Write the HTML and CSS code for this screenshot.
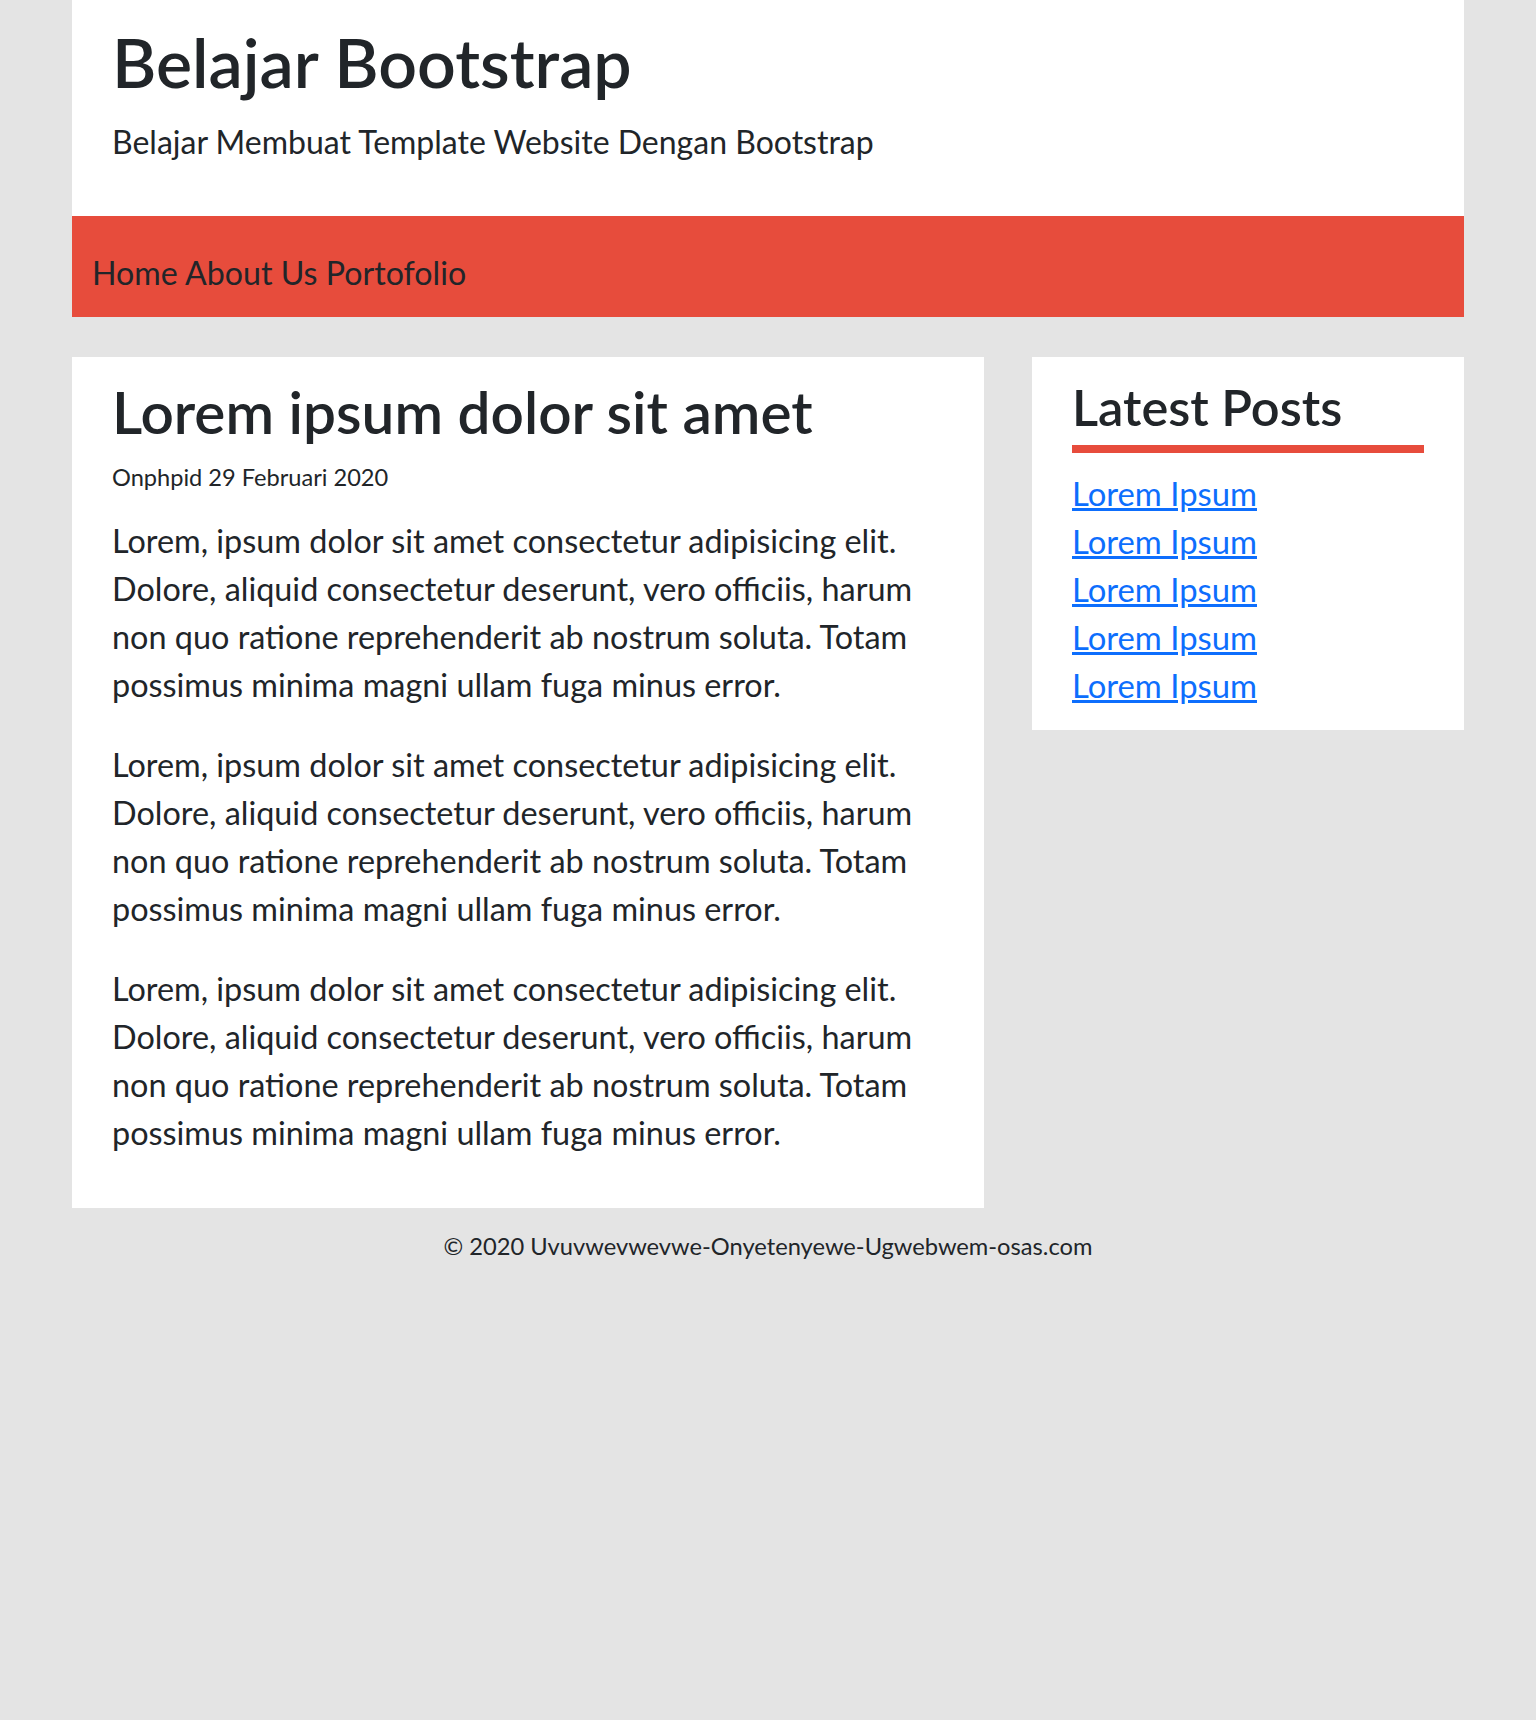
FILE: index.html
```
<!DOCTYPE html>
<html lang="id">
<head>
<meta charset="utf-8">
<title>Belajar Bootstrap</title>
<link rel="stylesheet" href="styles.css">
</head>
<body>
<div class="container">
  <header class="site-header">
    <h1 class="site-title">Belajar Bootstrap</h1>
    <p class="site-tagline">Belajar Membuat Template Website Dengan Bootstrap</p>
  </header>
  <nav class="site-nav">
    <a href="#">Home</a> <a href="#">About Us</a> <a href="#">Portofolio</a>
  </nav>
  <div class="content-row">
    <main class="post-box">
      <h2 class="post-title">Lorem ipsum dolor sit amet</h2>
      <div class="post-meta">Onphpid 29 Februari 2020</div>
      <p class="post-text">Lorem, ipsum dolor sit amet consectetur adipisicing elit. Dolore, aliquid consectetur deserunt, vero officiis, harum non quo ratione reprehenderit ab nostrum soluta. Totam possimus minima magni ullam fuga minus error.</p>
      <p class="post-text">Lorem, ipsum dolor sit amet consectetur adipisicing elit. Dolore, aliquid consectetur deserunt, vero officiis, harum non quo ratione reprehenderit ab nostrum soluta. Totam possimus minima magni ullam fuga minus error.</p>
      <p class="post-text">Lorem, ipsum dolor sit amet consectetur adipisicing elit. Dolore, aliquid consectetur deserunt, vero officiis, harum non quo ratione reprehenderit ab nostrum soluta. Totam possimus minima magni ullam fuga minus error.</p>
    </main>
    <aside class="side-box">
      <h3 class="side-title">Latest Posts</h3>
      <ul class="side-list">
        <li><a href="#">Lorem Ipsum</a></li>
        <li><a href="#">Lorem Ipsum</a></li>
        <li><a href="#">Lorem Ipsum</a></li>
        <li><a href="#">Lorem Ipsum</a></li>
        <li><a href="#">Lorem Ipsum</a></li>
      </ul>
    </aside>
  </div>
  <footer class="site-footer">© 2020 Uvuvwevwevwe-Onyetenyewe-Ugwebwem-osas.com</footer>
</div>
</body>
</html>
```
FILE: styles.css
```
html, body {
  margin: 0;
  padding: 0;
}
body {
  background: #e4e4e4;
  color: #212529;
  font-family: Lato, "Open Sans", sans-serif;
}
.container {
  width: 1392px;
  margin: 0 auto;
}
.site-header {
  background: #fff;
  padding: 21px 40px 50px;
}
.site-title {
  margin: 0;
  font-size: 68px;
  font-weight: 600;
  line-height: 1.2;
}
.site-tagline {
  margin: 15.5px 0 0;
  font-size: 32px;
  line-height: 48px;
}
.site-nav {
  background: #e74c3c;
  padding: 33px 20px 20px;
  font-size: 32.2px;
  line-height: 48px;
}
.site-nav a {
  color: #212529;
  text-decoration: none;
}
.content-row {
  display: grid;
  grid-template-columns: 912px 432px;
  column-gap: 48px;
  align-items: start;
  margin-top: 40px;
}
.post-box {
  background: #fff;
  padding: 19px 40px 51px;
}
.post-title {
  margin: 0;
  font-size: 58.5px;
  font-weight: 600;
  line-height: 1.2;
}
.post-meta {
  margin-top: 14px;
  font-size: 23.6px;
  line-height: 1.5;
}
.post-text {
  margin: 21px 0 0;
  font-size: 32.4px;
  line-height: 48px;
}
.post-text + .post-text {
  margin-top: 32px;
}
.side-box {
  background: #fff;
  padding: 20px 40px 20px;
}
.side-title {
  margin: 0;
  font-size: 50.5px;
  font-weight: 600;
  line-height: 1.2;
  padding-bottom: 7px;
  border-bottom: 8px solid #e74c3c;
}
.side-list {
  list-style: none;
  margin: 17px 0 0;
  padding: 0;
  font-size: 32.8px;
  line-height: 48px;
}
.side-list a {
  color: #0d6efd;
  text-decoration: underline;
}
.site-footer {
  margin-top: 21px;
  text-align: center;
  font-size: 23.7px;
  line-height: 1.5;
}
```
